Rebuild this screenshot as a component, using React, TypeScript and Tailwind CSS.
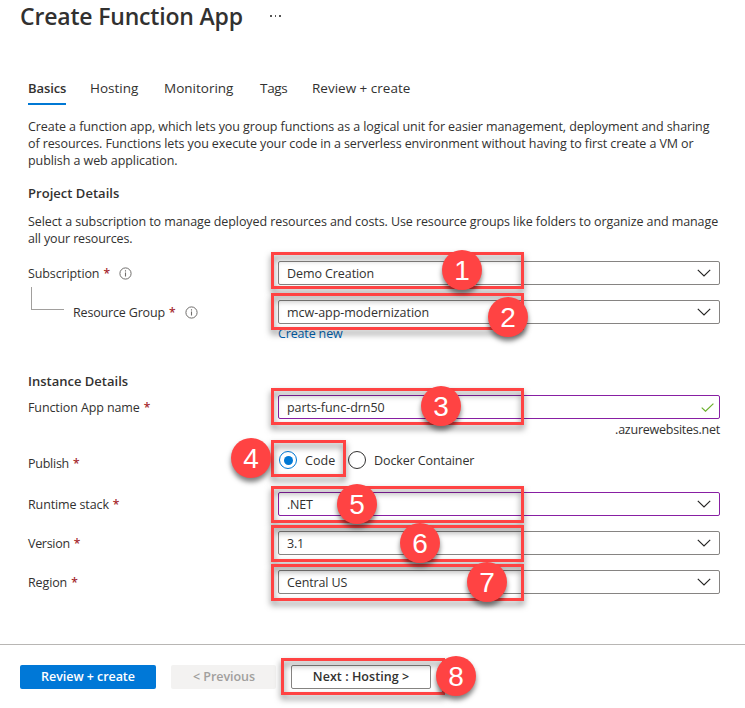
import type { ReactNode } from "react";

function Chevron() {
  return (
    <svg width="14" height="8" viewBox="0 0 14 8" className="mr-[8px] shrink-0" fill="none" stroke="#252423" strokeWidth="1.15">
      <path d="M0.8 0.8 L7 7 L13.2 0.8" />
    </svg>
  );
}

function Check() {
  return (
    <svg width="13" height="9" viewBox="0 0 13 9" className="mr-[5px] shrink-0" fill="none" stroke="#6bb02c" strokeWidth="1.2">
      <path d="M0.7 4.6 L4.5 8.2 L12.4 0.6" />
    </svg>
  );
}

function Info() {
  return (
    <svg width="13" height="13" viewBox="0 0 13 13" className="ml-[10px] mt-[1px] shrink-0" fill="none" stroke="#6f6d6b">
      <circle cx="6.5" cy="6.5" r="5.6" />
      <path d="M6.5 5.4 V9.6 M6.5 3.2 V4.4" strokeWidth="1.1" />
    </svg>
  );
}

function Label({ children, className = "" }: { children: ReactNode; className?: string }) {
  return (
    <div className={"flex h-[24px] shrink-0 items-center whitespace-nowrap " + className}>{children}</div>
  );
}

function Star() {
  return <span className="ml-[4px] w-[6px] text-[12px] font-semibold text-[#a4262c]">*</span>;
}

function Field({ value, tracking, purple, check }: { value: string; tracking: string; purple?: boolean; check?: boolean }) {
  return (
    <div
      className={
        "flex h-[24px] w-[442px] items-center justify-between rounded-[2px] border bg-white pl-[8px] " +
        (purple ? "border-[#881fa3]" : "border-[#868482]")
      }
    >
      <span className={tracking}>{value}</span>
      {check ? <Check /> : <Chevron />}
    </div>
  );
}

function Frame({ place }: { place: string }) {
  return (
    <div className={"absolute border-[3px] border-[#ff4343] drop-shadow-[0_4px_3px_rgba(0,0,0,0.5)] " + place} />
  );
}

function Marker({ n, place }: { n: number; place: string }) {
  return (
    <div
      className={
        "absolute flex size-[40px] items-center justify-center rounded-full bg-[#ff4343] pt-[2px] font-['Liberation_Sans',Arial,sans-serif] text-[28px] leading-[38px] text-white shadow-[0_4px_5px_rgba(0,0,0,0.5)] " +
        place
      }
    >
      {n}
    </div>
  );
}

export default function App() {
  return (
    <div className="relative flex h-[708px] w-[745px] flex-col overflow-hidden bg-white font-['Open_Sans','Noto_Sans',sans-serif] text-[12.5px] leading-[17px] text-[#323130]">
      <header className="flex h-[32px] items-center pl-[20px]">
        <h1 className="w-[223px] whitespace-nowrap text-[23px] font-semibold leading-[32px] tracking-[-0.18px]">Create Function App</h1>
        <div className="ml-[27px] flex gap-[3px]">
          <i className="size-[1.5px] bg-[#555]" />
          <i className="size-[1.5px] bg-[#555]" />
          <i className="size-[1.5px] bg-[#555]" />
        </div>
      </header>

      <nav className="mt-[44px] flex h-[29px] whitespace-nowrap pl-[28px] text-[13.5px] leading-[24px]">
        <div className="w-[38px] border-b-2 border-[#0078d4] text-[13px] font-semibold tracking-[-0.1px]">Basics</div>
        <div className="ml-[24px] w-[50px]">Hosting</div>
        <div className="ml-[24px] w-[71px]">Monitoring</div>
        <div className="ml-[25px] w-[28px] tracking-[-0.3px]">Tags</div>
        <div className="ml-[24px]">Review + create</div>
      </nav>

      <main className="flex flex-col pl-[28px]">
        <p className="mt-[13px] whitespace-nowrap tracking-[-0.08px]">
          Create a function app, which lets you group functions as a logical unit for easier management, deployment and sharing
          <br />
          <span className="tracking-[-0.1px]">of resources. Functions lets you execute your code in a serverless environment without having to first create a VM or</span>
          <br />
          publish a web application.
        </p>
        <h2 className="mt-[16px] text-[13px] font-semibold tracking-[0.03px]">Project Details</h2>
        <p className="mt-[11px] whitespace-nowrap tracking-[-0.085px]">
          Select a subscription to manage deployed resources and costs. Use resource groups like folders to organize and manage
          <br />
          <span className="tracking-[-0.13px]">all your resources.</span>
        </p>

        <div className="mt-[14px] flex">
          <Label className="w-[250px]">
            <span className="tracking-[-0.12px]">Subscription</span>
            <Star />
            <Info />
          </Label>
          <Field value="Demo Creation" tracking="tracking-[-0.08px]" />
        </div>
        <div className="mt-[15px] flex">
          <div className="ml-[3px] mt-[-13px] h-[23px] w-[33px] border-b border-l border-[#a19f9d]" />
          <Label className="ml-[9px] w-[205px]">
            <span className="tracking-[-0.17px]">Resource Group</span>
            <Star />
            <Info />
          </Label>
          <Field value="mcw-app-modernization" tracking="tracking-[-0.03px]" />
        </div>
        <a className="ml-[250px] mt-[1px] h-[17px] text-[#0065b3] tracking-[-0.15px]">Create new</a>

        <h2 className="mt-[31px] text-[13px] font-semibold">Instance Details</h2>
        <div className="mt-[5px] flex">
          <Label className="w-[250px]">
            <span className="tracking-[-0.1px]">Function App name</span>
            <Star />
          </Label>
          <Field value="parts-func-drn50" tracking="tracking-[-0.05px]" purple check />
        </div>
        <div className="mt-[2px] w-[692px] text-right tracking-[-0.24px]">.azurewebsites.net</div>

        <div className="mt-[13px] flex h-[24px]">
          <Label className="w-[251px]">
            <span className="tracking-[-0.25px]">Publish</span>
            <Star />
          </Label>
          <div className="mt-[-3px] flex h-[24px] items-center">
            <span className="flex size-[18px] items-center justify-center rounded-full border border-[#0078d4]">
              <span className="size-[9px] rounded-full bg-[#0078d4]" />
            </span>
            <span className="ml-[8px] w-[43px] tracking-[0.05px]">Code</span>
            <span className="size-[18px] rounded-full border border-[#323130]" />
            <span className="ml-[8px] tracking-[-0.1px]">Docker Container</span>
          </div>
        </div>

        <div className="mt-[17px] flex">
          <Label className="w-[250px]">
            <span className="tracking-[-0.12px]">Runtime stack</span>
            <Star />
          </Label>
          <Field value=".NET" tracking="tracking-[-0.2px]" purple />
        </div>
        <div className="mt-[15px] flex">
          <Label className="w-[250px]">
            <span className="tracking-[-0.3px]">Version</span>
            <Star />
          </Label>
          <Field value="3.1" tracking="tracking-[-0.2px]" />
        </div>
        <div className="mt-[15px] flex">
          <Label className="w-[250px]">
            <span className="tracking-[-0.12px]">Region</span>
            <Star />
          </Label>
          <Field value="Central US" tracking="tracking-[-0.12px]" />
        </div>
      </main>

      <footer className="mt-[50px] flex h-[64px] border-t border-[#b8b6b4] pl-[20px] pt-[20px] text-center font-semibold leading-[23px]">
        <div className="h-[24px] w-[136px] rounded-[2px] bg-[#0078d7] tracking-[-0.05px] text-white">Review + create</div>
        <div className="ml-[15px] h-[24px] w-[105px] rounded-[2px] bg-[#f3f2f1] pl-[1px] tracking-[-0.05px] text-[#a19f9d]">&lt; Previous</div>
        <div className="ml-[15px] h-[24px] w-[140px] rounded-[2px] border border-[#868482] leading-[21px] tracking-[0.05px]">Next : Hosting &gt;</div>
      </footer>

      <Frame place="left-[271px] top-[252px] h-[37px] w-[253px]" />
      <Frame place="left-[271px] top-[293px] h-[37px] w-[253px]" />
      <Frame place="left-[271px] top-[388px] h-[37px] w-[253px]" />
      <Frame place="left-[271px] top-[440px] h-[37px] w-[75px]" />
      <Frame place="left-[271px] top-[486px] h-[37px] w-[253px]" />
      <Frame place="left-[271px] top-[525px] h-[37px] w-[253px]" />
      <Frame place="left-[271px] top-[564px] h-[37px] w-[253px]" />
      <Frame place="left-[281px] top-[658px] h-[37px] w-[164px]" />
      <Marker n={1} place="left-[442px] top-[250px]" />
      <Marker n={2} place="left-[488px] top-[297px]" />
      <Marker n={3} place="left-[421px] top-[386px]" />
      <Marker n={4} place="left-[231px] top-[438px]" />
      <Marker n={5} place="left-[337px] top-[484px]" />
      <Marker n={6} place="left-[400px] top-[523px]" />
      <Marker n={7} place="left-[467px] top-[562px]" />
      <Marker n={8} place="left-[436px] top-[656px]" />
    </div>
  );
}
